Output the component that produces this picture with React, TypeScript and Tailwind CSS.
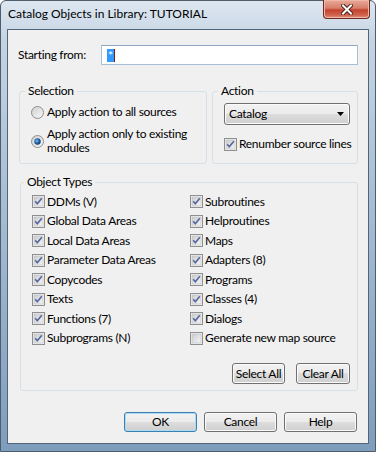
import React from 'react';

const leftTypes = [
  { label: 'DDMs (V)', checked: true },
  { label: 'Global Data Areas', checked: true },
  { label: 'Local Data Areas', checked: true },
  { label: 'Parameter Data Areas', checked: true },
  { label: 'Copycodes', checked: true },
  { label: 'Texts', checked: true },
  { label: 'Functions (7)', checked: true },
  { label: 'Subprograms (N)', checked: true },
];

const rightTypes = [
  { label: 'Subroutines', checked: true },
  { label: 'Helproutines', checked: true },
  { label: 'Maps', checked: true },
  { label: 'Adapters (8)', checked: true },
  { label: 'Programs', checked: true },
  { label: 'Classes (4)', checked: true },
  { label: 'Dialogs', checked: true },
  { label: 'Generate new map source', checked: false },
];

const CheckBox: React.FC<{ checked: boolean }> = ({ checked }) => (
  <svg width="13" height="13" viewBox="0 0 13 13" className="shrink-0">
    <defs>
      <linearGradient id="cbg" x1="0" y1="0" x2="1" y2="1">
        <stop offset="0" stopColor="#cbcbcb" />
        <stop offset="1" stopColor="#f6f6f6" />
      </linearGradient>
    </defs>
    <rect x="0.5" y="0.5" width="12" height="12" fill="#f4f4f4" stroke="#8f8f8f" />
    <rect x="2" y="2" width="9" height="9" fill="url(#cbg)" stroke="#b9bcc0" strokeWidth="0.6" />
    {checked && (
      <path d="M3.2 6.3 L5.3 8.8 L9.8 3.2" fill="none" stroke="#5567a0" strokeWidth="1.6" strokeLinejoin="round" />
    )}
  </svg>
);

const Radio: React.FC<{ checked: boolean }> = ({ checked }) => (
  <svg width="13" height="13" viewBox="0 0 13 13" className="shrink-0">
    <defs>
      <linearGradient id="rbg" x1="0" y1="0" x2="1" y2="1">
        <stop offset="0" stopColor="#cfcfcf" />
        <stop offset="1" stopColor="#f8f8f8" />
      </linearGradient>
      <radialGradient id="rdot" cx="0.4" cy="0.4" r="0.6">
        <stop offset="0" stopColor="#7fc4ef" />
        <stop offset="0.5" stopColor="#2c6fb1" />
        <stop offset="1" stopColor="#0f3e75" />
      </radialGradient>
    </defs>
    <circle cx="6.5" cy="6.5" r="6" fill="url(#rbg)" stroke="#8f8f8f" />
    {checked && <circle cx="6.5" cy="6.5" r="3.2" fill="url(#rdot)" />}
  </svg>
);

const WinButton: React.FC<{ label: string; className: string; focused?: boolean }> = ({ label, className, focused }) => (
  <button
    className={
      'flex items-center justify-center rounded-[3px] border text-[12px] leading-[14px] text-black bg-[linear-gradient(#f2f2f2,#ebebeb_50%,#dddddd_50%,#cfcfcf)] ' +
      (focused ? 'border-[#3c7fb1] shadow-[inset_0_0_0_1px_#a9dcf5] ' : 'border-[#707070] shadow-[inset_0_0_0_1px_#fbfbfb] ') +
      className
    }
  >
    {label}
  </button>
);

export default function App() {
  return (
    <div className="w-[376px] h-[452px] flex flex-col rounded-t-[6px] border border-[#4f5c69] bg-[linear-gradient(#dde7f1,#c5d4e3_40px,#a4bbd2_220px,#7e9dbc)] font-['Lato',sans-serif] text-black">
      {/* title bar */}
      <div className="h-[28px] flex items-start justify-between pl-[7px]">
        <span className="mt-[6px] text-[12px] leading-[14px]">Catalog Objects in Library: TUTORIAL</span>
        <div className="-mt-px mr-[5px] w-[47px] h-[19px] rounded-b-[4px] border border-[#6e2a21] border-t-0 bg-[linear-gradient(#eaa897,#d77f6c_45%,#c4422f_55%,#d0654d_85%,#e29a85)] shadow-[inset_0_0_0_1px_#f0b7a8] flex items-center justify-center">
          <svg width="12" height="11" viewBox="0 0 12 11">
            <path d="M2 1.5 L10 9.5 M10 1.5 L2 9.5" stroke="#4a2320" strokeWidth="4" strokeLinecap="square" />
            <path d="M2 1.5 L10 9.5 M10 1.5 L2 9.5" stroke="#ffffff" strokeWidth="2" strokeLinecap="square" />
          </svg>
        </div>
      </div>

      {/* client area */}
      <div className="mx-[6px] mb-[7px] flex-1 border border-[#53657a] bg-[#f0f0f0] flex flex-col text-[12px] leading-[14px] tracking-[-0.3px]">
        <div className="pt-[15px] pl-[10px] pr-[10px] flex items-center">
          <span className="w-[83px]">Starting from:</span>
          <div className="w-[257px] h-[20px] border border-[#a9bfd6] border-t-[#8ea8c3] bg-white flex items-center pl-[5px]">
            <span className="bg-[#3399ff] text-white px-[1px] leading-[13px]">*</span>
            <span className="w-px h-[13px] bg-[#7a1f10]" />
          </div>
        </div>

        <div className="mt-[19px] ml-[11px] flex gap-[5px]">
          <fieldset className="w-[188px] h-[80px] border border-[#d5dfe5] rounded-[3px] pl-[11px] pb-[8px]">
            <legend className="-ml-[6px] px-[3px] leading-[14px]">Selection</legend>
            <div className="pt-[7px] flex items-center gap-[3px] h-[21px]">
              <Radio checked={false} />
              <span className="whitespace-nowrap">Apply action to all sources</span>
            </div>
            <div className="mt-[8px] flex items-center gap-[3px]">
              <Radio checked={true} />
              <span className="whitespace-nowrap">
                Apply action only to existing
                <br />
                modules
              </span>
            </div>
          </fieldset>

          <fieldset className="w-[146px] h-[80px] border border-[#d5dfe5] rounded-[3px] pl-[11px]">
            <legend className="-ml-[6px] px-[3px] leading-[14px]">Action</legend>
            <div className="mt-[5px] w-[126px] h-[22px] rounded-[3px] border border-[#707070] bg-[linear-gradient(#f2f2f2,#ebebeb_50%,#dddddd_50%,#cfcfcf)] shadow-[inset_0_0_0_1px_#fbfbfb] flex items-center justify-between pl-[4px] pr-[5px]">
              <span>Catalog</span>
              <svg width="7" height="4" viewBox="0 0 7 4">
                <path d="M0 0 H7 L3.5 4 Z" fill="#000" />
              </svg>
            </div>
            <div className="mt-[12px] flex items-center gap-[2px] h-[14px]">
              <CheckBox checked={true} />
              <span className="whitespace-nowrap">Renumber source lines</span>
            </div>
          </fieldset>
        </div>

        <fieldset className="mt-[11px] ml-[12px] w-[338px] h-[216px] border border-[#d5dfe5] rounded-[3px] pl-[11px] pr-[7px]">
          <legend className="-ml-[8px] px-[3px] leading-[14px]">Object Types</legend>
          <div className="pt-[3px] grid grid-cols-[158px_1fr] auto-rows-[19.5px]">
            {leftTypes.map((item, i) => (
              <React.Fragment key={item.label}>
                <div className="flex items-center gap-[2px]">
                  <CheckBox checked={item.checked} />
                  <span className="whitespace-nowrap">{item.label}</span>
                </div>
                <div className="flex items-center gap-[2px]">
                  <CheckBox checked={rightTypes[i].checked} />
                  <span className="whitespace-nowrap">{rightTypes[i].label}</span>
                </div>
              </React.Fragment>
            ))}
          </div>
          <div className="mt-[15px] flex justify-end gap-[11px]">
            <WinButton label="Select All" className="w-[53px] h-[21px]" />
            <WinButton label="Clear All" className="w-[54px] h-[21px]" />
          </div>
        </fieldset>

        <div className="mt-[21px] pr-[11px] flex justify-end gap-[7px]">
          <WinButton label="OK" className="w-[73px] h-[20px]" focused />
          <WinButton label="Cancel" className="w-[73px] h-[20px]" />
          <WinButton label="Help" className="w-[73px] h-[20px]" />
        </div>
      </div>
    </div>
  );
}
